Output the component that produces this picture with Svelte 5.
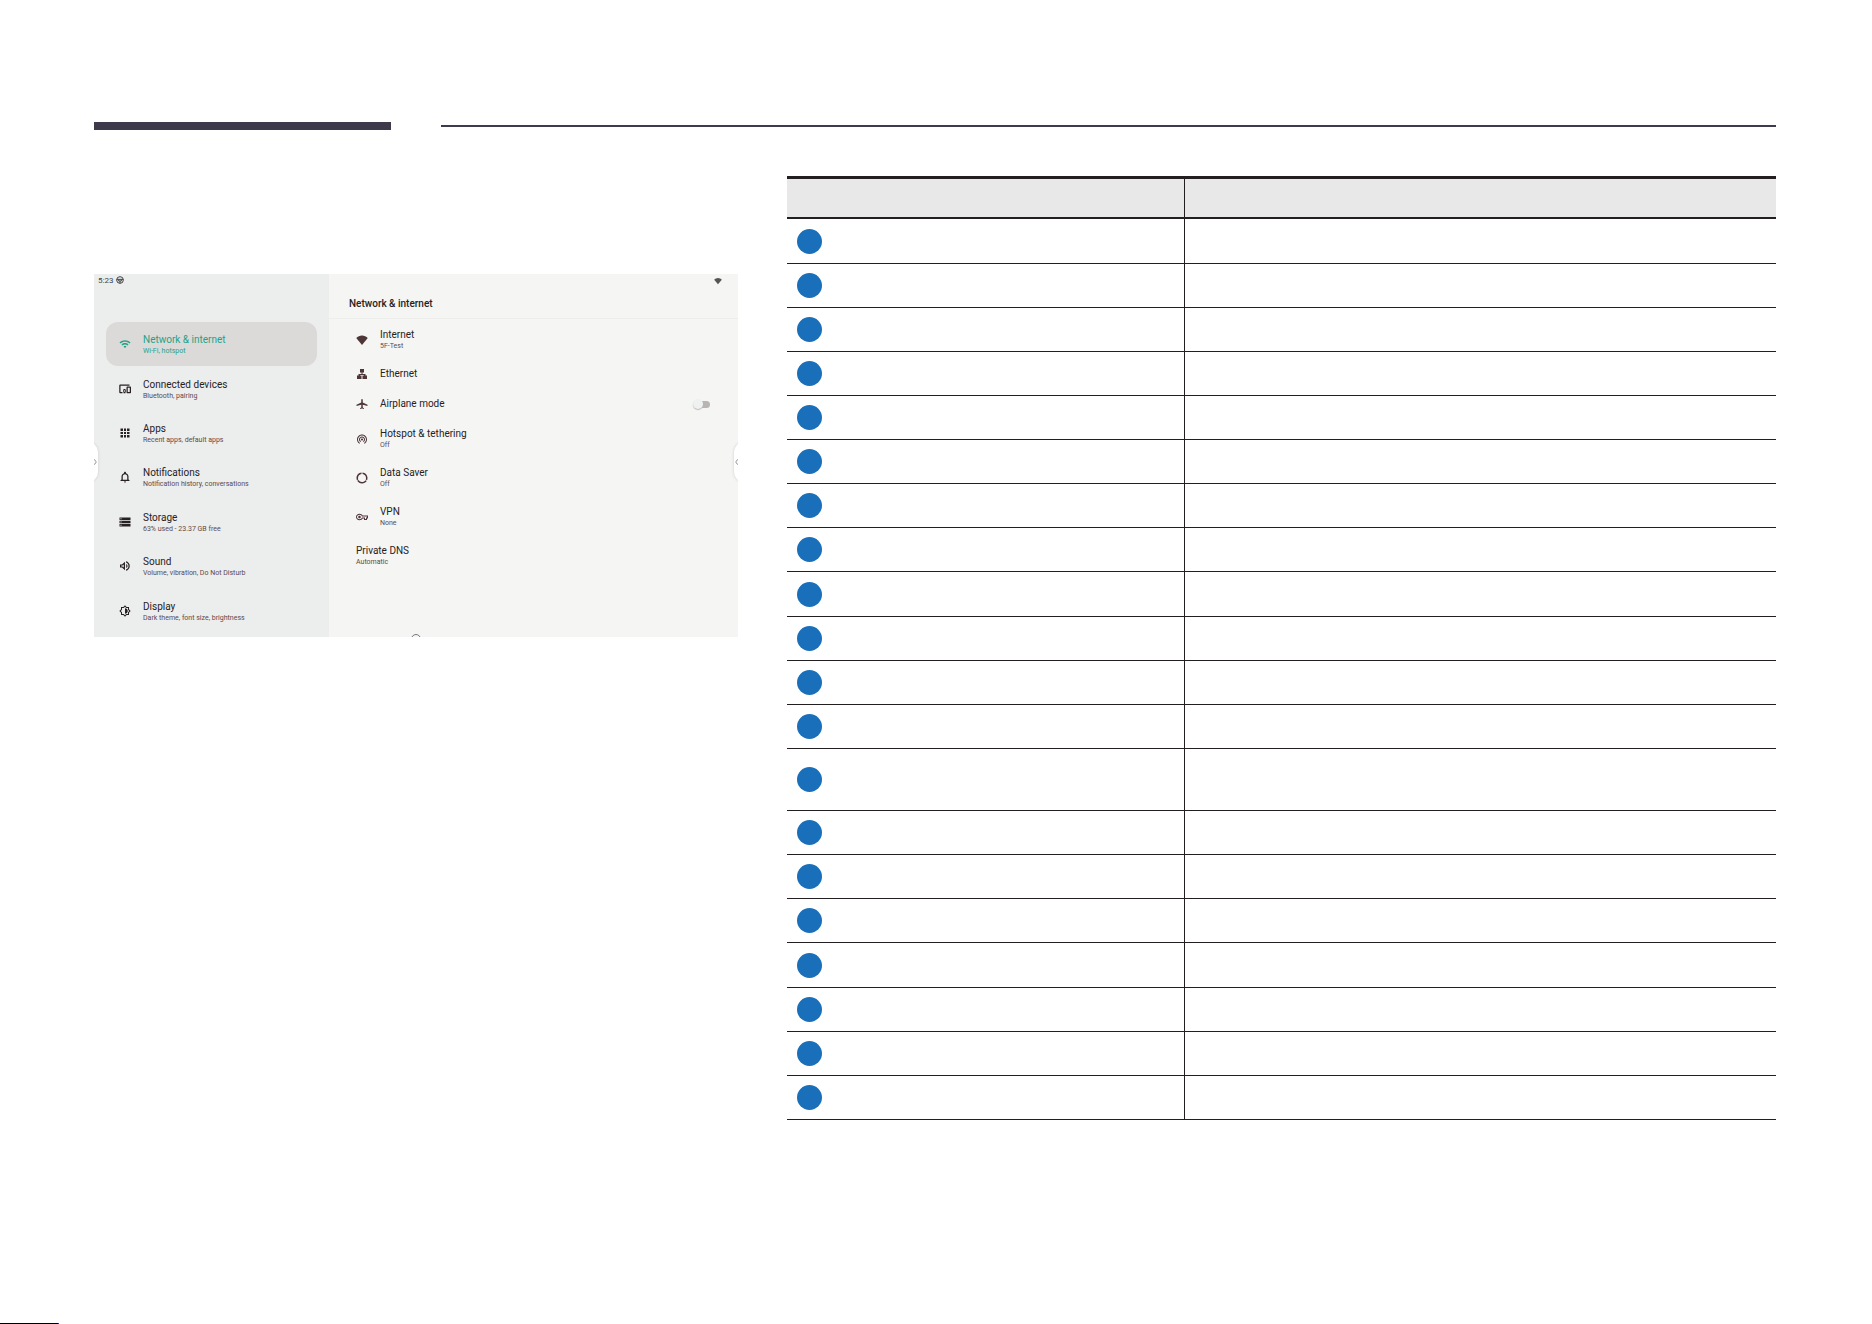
<script>
  const categories = [
    { icon: 'wifi', title: 'Network & internet', sub: 'Wi-Fi, hotspot', active: true },
    { icon: 'devices', title: 'Connected devices', sub: 'Bluetooth, pairing' },
    { icon: 'apps', title: 'Apps', sub: 'Recent apps, default apps' },
    { icon: 'bell', title: 'Notifications', sub: 'Notification history, conversations' },
    { icon: 'storage', title: 'Storage', sub: '63% used - 23.37 GB free' },
    { icon: 'sound', title: 'Sound', sub: 'Volume, vibration, Do Not Disturb' },
    { icon: 'display', title: 'Display', sub: 'Dark theme, font size, brightness' }
  ];

  const options = [
    { icon: 'signal', title: 'Internet', sub: '5F-Test' },
    { icon: 'ethernet', title: 'Ethernet' },
    { icon: 'airplane', title: 'Airplane mode', toggle: true },
    { icon: 'hotspot', title: 'Hotspot & tethering', sub: 'Off' },
    { icon: 'data', title: 'Data Saver', sub: 'Off' },
    { icon: 'vpn', title: 'VPN', sub: 'None' },
    { title: 'Private DNS', sub: 'Automatic' }
  ];

  const rows = Array.from({ length: 20 }, (_, i) => ({ id: i + 1, tall: i === 12 }));

  const icons = {
    wifi: 'M1 9l2 2c5-5 13-5 18 0l2-2C17 3 7 3 1 9zm8 8l3 3 3-3c-1.700-1.700-4.300-1.700-6 0zm-4-4l2 2c2.800-2.800 7.200-2.800 10 0l2-2c-3.900-3.900-10.100-3.900-14 0z',
    devices: 'M3 5.500h18V3H3C1.500 3 .5 4 .5 5.500V18c0 1.500 1 2.500 2.500 2.500h4V18H3V5.500zM13 12H9v1.800c-.6.500-1 1.300-1 2.200s.4 1.700 1 2.200V20.500h4v-2.300c.6-.5 1-1.300 1-2.200s-.4-1.700-1-2.200V12zm-2 5.500c-.8 0-1.500-.7-1.500-1.500s.7-1.500 1.500-1.500 1.500.7 1.500 1.500-.7 1.500-1.500 1.500zM22.500 7h-6c-1 0-1.500.5-1.500 1.500V19c0 1 .5 1.500 1.500 1.500h6c1 0 1.500-.5 1.500-1.500V8.500c0-1-.5-1.500-1.500-1.500zm-1 11h-4V9.500h4V18z',
    apps: 'M3 8h5V3H3v5zm7 13h4v-5h-4v5zm-7 0h5v-5H3v5zm0-7h5v-4H3v4zm7 0h4v-4h-4v4zm6-11v5h5V3h-5zm-6 5h4V3h-4v5zm6 6h5v-4h-5v4zm0 7h5v-5h-5v5z',
    bell: 'M12 23c1.100 0 2-.9 2-2h-4c0 1.100.9 2 2 2zm7-6v-6c0-3.300-1.900-5.900-5-6.700V3.500c0-1-.9-2-2-2s-2 1-2 2v.8c-3.100.8-5 3.400-5 6.700v6l-2 1.500V20h18v-1.500L19 17zm-2.500.5h-9V11c0-2.500 1.900-4.500 4.500-4.500s4.500 2 4.500 4.500v6.500z',
    storage: 'M1 21h22v-5H1v5zm2-3.500h2v2H3v-2zM1 3v5h22V3H1zm4 3.500H3v-2h2v2zm-4 8h22v-5H1v5zM3 11h2v2H3v-2z',
    sound: 'M2 9v6h4l6 5.500v-17L6 9H2zm7.500-.2v6.400L7 12.800H4.500v-1.600H7l2.500-2.400zM17 12c0-1.800-1-3.300-2.500-4v8c1.500-.7 2.500-2.200 2.500-4zM14 2.500v2.600c2.900.9 5 3.700 5 6.900s-2.100 6-5 6.900v2.600c4.300-1 7.500-4.800 7.500-9.500S18.300 3.500 14 2.500z',
    display: 'M20 8.700V4h-4.700L12 .7 8.700 4H4v4.700L.7 12 4 15.300V20h4.700l3.300 3.300 3.300-3.300H20v-4.700l3.300-3.300L20 8.700zm-2 5.800V18h-3.500L12 20.500 9.500 18H6v-3.500L3.500 12 6 9.500V6h3.500L12 3.500 14.500 6H18v3.500l2.500 2.500-2.500 2.500zM12 6.500c3 0 5.500 2.500 5.500 5.500S15 17.500 12 17.500v-11z',
    signal: 'M12 22L.5 8C3.500 5.500 7.500 3 12 3s8.500 2.500 11.500 5L12 22z',
    ethernet: 'M8 2h8v7h-3v3h6v3h3v7h-9v-7h3v-1H8v1h3v7H2v-7h3v-3h6V9H8z',
    airplane: 'M23 16v-2.500L13.500 9V3.500c0-.8-.7-1.500-1.500-1.500s-1.500.7-1.500 1.500V9L1 13.500V16l9.500-2.500V19L8 20.500V22l4-1 4 1v-1.500L13.500 19v-5.500L23 16z',
    hotspot: 'M12 11c-1.100 0-2 .9-2 2s.9 2 2 2 2-.9 2-2-.9-2-2-2zm6 2c0-3.300-2.700-6-6-6s-6 2.700-6 6c0 2.200 1.200 4.100 3 5.200l1-1.700c-1.200-.7-2-2-2-3.500 0-2.200 1.800-4 4-4s4 1.800 4 4c0 1.500-.8 2.800-2 3.500l1 1.700c1.800-1.100 3-3 3-5.200zM12 3C6.500 3 2 7.500 2 13c0 3.700 2 6.900 5 8.600l1-1.700c-2.400-1.400-4-4-4-6.900 0-4.400 3.600-8 8-8s8 3.600 8 8c0 3-1.600 5.500-4 6.900l1 1.700c3-1.700 5-4.900 5-8.600 0-5.500-4.500-10-10-10z',
    data: 'M13 1v3c4 .5 7 3.900 7 8 0 1-.2 2-.6 3l2.700 1.500c.6-1.300.9-2.900.9-4.500 0-5.800-4.400-10.500-10-11zM12 20c-3 0-5.500-1.500-7-3.900L2.400 17.600C4.300 20.800 8 23 12 23s7.500-2 9.500-5.100L19 16.300C17.500 18.500 15 20 12 20zM4 12c0-4.100 3-7.500 7-8V1C5.400 1.500 1 6.200 1 12c0 1.600.3 3.200.9 4.500L4.600 15c-.4-1-.6-2-.6-3z',
    vpn: 'M22 18h-6v-3h-2.700c-1.100 2-3.500 3.500-6.300 3.500-3.900 0-7-2.900-7-6.500s3.100-6.500 7-6.500c2.700 0 5.200 1.500 6.300 3.500H24v6h-2v3zm-4-2h2v-3h2v-2H12c-.7-2.100-2.700-3.500-5-3.500-2.800 0-5 2-5 4.500s2.200 4.500 5 4.500c2.300 0 4.300-1.400 5-3.500h6v3zM7 14.500c-1.500 0-2.500-1.100-2.500-2.500S5.500 9.500 7 9.500 9.500 10.600 9.500 12 8.500 14.500 7 14.500z'
  };

  let airplane = false;
</script>

<div class="page">
  <header class="rules">
    <div class="rule thick"></div>
    <div class="rule thin"></div>
  </header>

  <main class="content">
    <section class="device">
      <aside class="sidebar">
        <div class="status">
          <span>5:23</span>
          <svg viewBox="0 0 24 24" fill="none" stroke="currentColor" stroke-width="3" aria-hidden="true">
            <circle cx="12" cy="12" r="10" />
            <path d="M2 10h20M8 10v5h8v-5M12 15v7" />
          </svg>
        </div>
        <nav class="categories">
          {#each categories as item}
            <a href="#{item.icon}" class="category" class:active={item.active}>
              <svg class="icon" viewBox="0 0 24 24" fill="currentColor" fill-rule="evenodd" aria-hidden="true"><path d={icons[item.icon]} /></svg>
              <span class="label">
                <span class="title">{item.title}</span>
                <span class="sub">{item.sub}</span>
              </span>
            </a>
          {/each}
        </nav>
      </aside>

      <div class="panel">
        <div class="panel-status">
          <svg viewBox="0 0 24 24" fill="currentColor" aria-hidden="true"><path d={icons.signal} /></svg>
        </div>
        <h1 class="heading">Network & internet</h1>
        <ul class="options">
          {#each options as item}
            <li class="option" class:single={!item.sub}>
              {#if item.icon}
                <svg class="icon" viewBox="0 0 24 24" fill="currentColor" fill-rule="evenodd" aria-hidden="true"><path d={icons[item.icon]} /></svg>
              {/if}
              {#if item.toggle}
                <label class="title" for="airplane">{item.title}</label>
                <input id="airplane" class="switch" type="checkbox" bind:checked={airplane} />
              {:else}
                <span class="label">
                  <span class="title">{item.title}</span>
                  {#if item.sub}<span class="sub">{item.sub}</span>{/if}
                </span>
              {/if}
            </li>
          {/each}
        </ul>
      </div>

      <!-- edge handles and the home button, cut off by the frame -->
      <div class="handle left">
        <svg viewBox="0 0 4 8" fill="none" stroke="currentColor" aria-hidden="true"><path d="M0 1h1l2 3-2 3H0" /></svg>
      </div>
      <div class="handle right">
        <svg viewBox="0 0 4 8" fill="none" stroke="currentColor" aria-hidden="true"><path d="M4 1H3L1 4l2 3h1" /></svg>
      </div>
      <div class="home"></div>
    </section>

    <table class="legend">
      <colgroup>
        <col class="col-item" />
        <col />
      </colgroup>
      <thead>
        <tr><th></th><th></th></tr>
      </thead>
      <tbody>
        {#each rows as row (row.id)}
          <tr class:tall={row.tall}>
            <td><span class="dot"></span></td>
            <td></td>
          </tr>
        {/each}
      </tbody>
    </table>
  </main>

  <footer class="strip"></footer>
</div>

<style>
  :global(body) {
    margin: 0;
    background: #fff;
  }

  .page {
    min-height: 100vh;
    box-sizing: border-box;
    display: flex;
    flex-direction: column;
    padding-top: 122px;
    font-family: Roboto, 'Liberation Sans', sans-serif;
    color: #272123;
  }

  .rules {
    display: grid;
    grid-template-columns: 297fr 1335fr;
    gap: 50px;
    align-items: center;
    padding: 0 96px 0 94px;
  }

  .rule {
    background: #3e3a4b;
  }

  .thick {
    height: 8px;
  }

  .thin {
    height: 2px;
  }

  .content {
    display: grid;
    grid-template-columns: 644fr 989fr;
    gap: 49px;
    align-items: start;
    padding: 46px 96px 48px 94px;
  }

  .device {
    position: relative;
    display: grid;
    grid-template-columns: 235fr 409fr;
    height: 363px;
    margin-top: 98px;
    overflow: hidden;
    background: #f5f5f4;
  }

  .sidebar {
    display: flex;
    flex-direction: column;
    padding: 0 12px 4px;
    background: #eceded;
  }

  .status {
    display: flex;
    align-items: center;
    gap: 3px;
    height: 12px;
    margin: 0 -8px 36px;
    font-size: 8px;
    color: #444;
  }

  .status svg {
    width: 8px;
    height: 8px;
  }

  .categories {
    flex: 1;
    display: grid;
    grid-auto-rows: 1fr;
  }

  .category {
    display: flex;
    align-items: center;
    gap: 12px;
    padding-left: 13px;
    border-radius: 12px;
    color: inherit;
    text-decoration: none;
  }

  .category .label {
    padding-top: 2px;
  }

  .category.active {
    background: #dcdad9;
    color: #24a287;
  }

  .icon {
    flex: none;
    width: 12px;
    height: 12px;
  }

  .label {
    display: flex;
    flex-direction: column;
  }

  .title {
    font-size: 10px;
    line-height: 12px;
  }

  .sub {
    font-size: 7px;
    line-height: 10px;
    color: #5d4a4b;
  }

  .active .sub {
    color: inherit;
  }

  .panel-status {
    display: flex;
    align-items: center;
    justify-content: flex-end;
    height: 14px;
    padding-right: 16px;
    color: #555;
  }

  .panel-status svg {
    width: 8px;
    height: 8px;
  }

  .heading {
    margin: 0;
    padding: 10px 0 8px 20px;
    border-bottom: 1px solid #ededec;
    font-size: 10px;
    font-weight: 500;
    line-height: 12px;
  }

  .options {
    margin: 0;
    padding: 1px 28px 0 27px;
    list-style: none;
  }

  .option {
    display: flex;
    align-items: center;
    gap: 12px;
    height: 39px;
  }

  .option.single {
    height: 30px;
  }

  .option .icon {
    color: #4d3538;
  }

  .switch {
    appearance: none;
    display: flex;
    align-items: center;
    width: 16px;
    height: 7px;
    margin: 0 0 0 auto;
    border-radius: 4px;
    background: #b9b4b2;
  }

  .switch::before {
    content: '';
    flex: none;
    width: 10px;
    height: 10px;
    margin-left: -1px;
    border-radius: 50%;
    background: #eff1f1;
    box-shadow: 0 1px 1px #bbb;
  }

  .switch:checked::before {
    margin-left: 7px;
  }

  .handle {
    position: absolute;
    top: 168px;
    display: flex;
    align-items: center;
    box-sizing: border-box;
    width: 20px;
    height: 40px;
    border-radius: 10px;
    background: #fff;
    box-shadow: 0 0 3px #ccc;
    color: #777;
  }

  .handle svg {
    width: 3px;
    height: 6px;
  }

  .handle.left {
    left: -16px;
    justify-content: flex-end;
    padding-right: 1px;
  }

  .handle.right {
    right: -16px;
    padding-left: 1px;
  }

  .home {
    position: absolute;
    bottom: -7px;
    left: 50%;
    width: 8px;
    height: 8px;
    margin-left: -5px;
    border: 1px solid #777;
    border-radius: 50%;
  }

  .legend {
    width: 100%;
    table-layout: fixed;
    border-collapse: separate;
    border-spacing: 0;
    border-top: 3px solid #231f20;
  }

  .col-item {
    width: 398px;
  }

  .legend th {
    height: 38px;
    padding: 0;
    background: #e8e8e8;
    border-bottom: 2px solid #231f20;
  }

  .legend td {
    height: 43px;
    padding: 0 10px;
    border-bottom: 1px solid #231f20;
  }

  .legend tbody tr:nth-child(8n + 1) td {
    height: 44px;
  }

  .legend .tall td {
    height: 61px;
  }

  .legend th:first-child,
  .legend td:first-child {
    border-right: 1px solid #231f20;
  }

  .dot {
    display: block;
    width: 25px;
    height: 25px;
    border-radius: 50%;
    background: #1a6fba;
  }

  .strip {
    width: 58px;
    height: 1px;
    margin-top: auto;
    background: #000;
    border-right: 1px solid #3a1fe0;
  }
</style>
